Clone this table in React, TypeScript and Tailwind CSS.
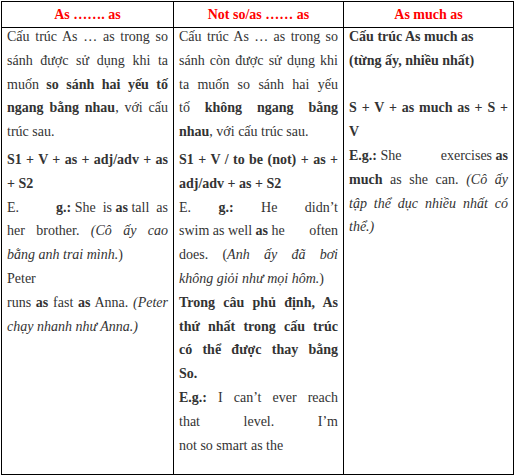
import React from "react";

// one visual line of a cell; "j" lines are stretched to the full width like the reference,
// "split" lines push their last group to the right edge
type Line = { j?: boolean; gap?: boolean; split?: [React.ReactNode, React.ReactNode]; c?: React.ReactNode };

const B = ({ children }: { children: React.ReactNode }) => <span className="font-bold">{children}</span>;
const I = ({ children }: { children: React.ReactNode }) => <span className="italic">{children}</span>;

const col1: Line[] = [
    { j: true, c: "Cấu trúc As … as trong so" },
    { j: true, c: "sánh được sử dụng khi ta" },
    { j: true, c: <>muốn <B>so sánh hai yếu tố</B></> },
    { j: true, c: <><B>ngang bằng nhau</B>, với cấu</> },
    { c: "trúc sau.", gap: true },
    { j: true, c: <B>S1 + V + as + adj/adv + as</B> },
    { c: <B>+ S2</B> },
    { split: ["E.", <span className="whitespace-pre"><B>g.:</B> She  is <B>as</B> tall  as</span>] },
    { j: true, c: <>her brother. <I>(Cô ấy cao</I></> },
    { c: <><I>bằng anh trai mình.</I>)</> },
    { c: "Peter" },
    { j: true, c: <>runs <B>as</B> fast <B>as</B> Anna. <I>(Peter</I></> },
    { c: <I>chạy nhanh như Anna.)</I> },
];

const col2: Line[] = [
    { j: true, c: "Cấu trúc As … as trong so" },
    { j: true, c: "sánh còn được sử dụng khi" },
    { j: true, c: "ta muốn so sánh hai yếu" },
    { j: true, c: <>tố <B>không ngang bằng</B></> },
    { c: <><B>nhau</B>, với cấu trúc sau.</>, gap: true },
    { j: true, c: <B>S1 + V / to be (not) + as +</B> },
    { c: <B>adj/adv + as + S2</B> },
    { j: true, c: <>E. <B>g.:</B> He didn’t</> },
    { split: [<>swim as well <B>as</B> he</>, "often"] },
    { j: true, c: <>does. (<I>Anh ấy đã bơi</I></> },
    { c: <><I>không giỏi như mọi hôm.</I>)</> },
    { j: true, c: <B>Trong câu phủ định, As</B> },
    { j: true, c: <B>thứ nhất trong cấu trúc</B> },
    { j: true, c: <B>có thể được thay bằng</B> },
    { c: <B>So.</B> },
    { j: true, c: <><B>E.g.:</B> I can’t ever reach</> },
    { j: true, c: "that level. I’m" },
    { c: "not so smart as the" },
];

const col3: Line[] = [
    { c: <B>Cấu trúc As much as</B> },
    { c: <B>(từng ấy, nhiều nhất)</B> },
    { c: "\u00a0" },
    { j: true, c: <B>S + V + as much as + S +</B> },
    { c: <B>V</B> },
    { split: [<><B>E.g.:</B> She</>, <>exercises <B>as</B></>] },
    { j: true, c: <><B>much</B> as she can. <I>(Cô ấy</I></> },
    { j: true, c: <I>tập thể dục nhiều nhất có</I> },
    { c: <I>thể.)</I> },
];

function Cell({ lines, first }: { lines: Line[]; first?: boolean }) {
    return (
        <div className={`px-[5px] -mt-[3px] ${first ? "" : "border-l border-black"}`}>
            {lines.map((l, i) =>
                l.split ? (
                    <div key={i} className="flex justify-between">
                        <span>{l.split[0]}</span>
                        <span>{l.split[1]}</span>
                    </div>
                ) : (
                    <div
                        key={i}
                        className={`${l.j ? "text-justify [text-align-last:justify]" : "text-left"} ${l.gap ? "mb-[4px]" : ""}`}
                    >
                        {l.c}
                    </div>
                )
            )}
        </div>
    );
}

export default function App() {
    const heads = ["As ……. as", "Not so/as …… as", "As much as"];
    return (
        <div className="w-[515px] h-[476px] bg-white overflow-hidden pt-px pl-px font-['Liberation_Serif','Times_New_Roman',serif]">
            <div className="w-[513px] border border-black text-[14px] leading-[23.8px] text-[#333]">
                <div className="grid grid-cols-[171px_170px_170px] h-[26px] border-b border-black">
                    {heads.map((h, i) => (
                        <div
                            key={h}
                            className={`flex items-center justify-center font-bold text-[#ff0000] ${i ? "border-l border-black" : ""}`}
                        >
                            {h}
                        </div>
                    ))}
                </div>
                <div className="grid grid-cols-[171px_170px_170px] h-[446px] overflow-hidden">
                    <Cell lines={col1} first />
                    <Cell lines={col2} />
                    <Cell lines={col3} />
                </div>
            </div>
        </div>
    );
}
